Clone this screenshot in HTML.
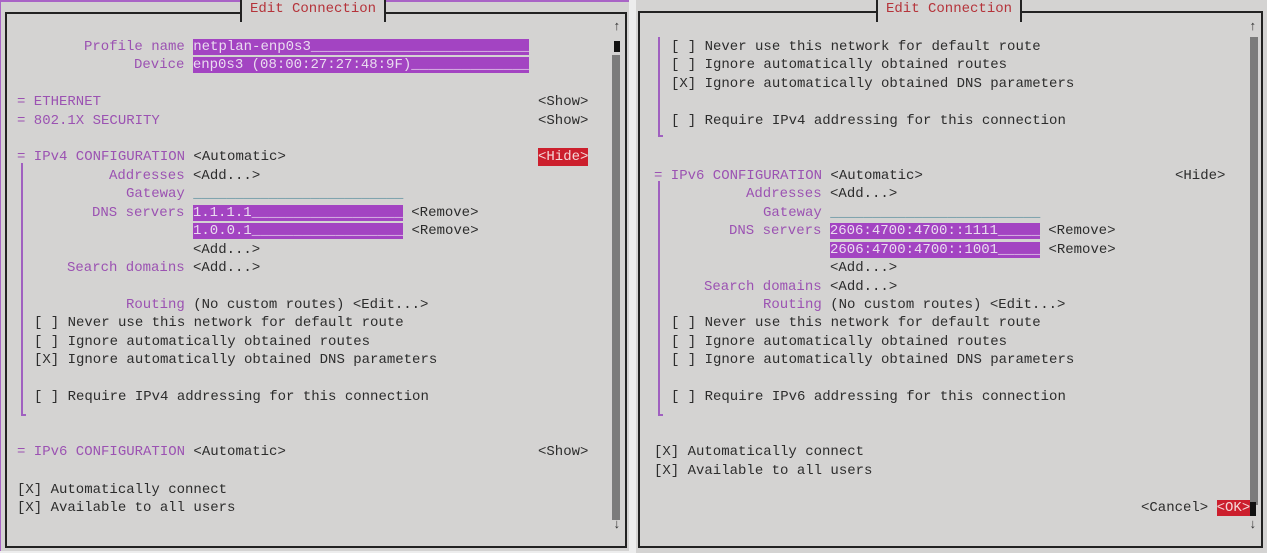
<!DOCTYPE html>
<html><head><meta charset="utf-8"><style>
*{margin:0;padding:0;box-sizing:border-box}
body{width:1267px;height:553px;background:#ededed;position:relative;overflow:hidden;font-family:"Liberation Mono","DejaVu Sans Mono",monospace;font-size:14px;color:#2c2c2c}
.pan{position:absolute;background:#d4d3d2}
.box{position:absolute;border:2px solid #222}
.l{position:absolute;white-space:pre;line-height:18px;height:18px}
.p{color:#9b52b2}
.f{background:#a344c2;color:#eadcf0}
.g{color:#4f8a99}
.r{background:#cc1f2d;color:#f4d8d8}
.t{position:absolute;background:#d4d3d2;color:#b5333a;white-space:pre;line-height:18px;padding:0 8px;border-left:2px solid #222;border-right:2px solid #222;height:22px;top:0}
.bar{position:absolute;width:2px;background:#a060c0}
.trk{position:absolute;background:#7b7b7b;width:8px}
.ar{position:absolute;font-size:13px;color:#333}
</style></head><body>
<div class="pan" style="left:0;top:0;width:629px;height:551px;border-top:2px solid #a964c6;border-left:1px solid #a964c6"></div>
<div class="pan" style="left:636px;top:0;width:631px;height:553px"></div>
<div class="box" style="left:5px;top:12px;width:622px;height:536px"></div>
<div class="box" style="left:638px;top:11px;width:625px;height:537px"></div>
<div class="t" style="left:240px">Edit Connection</div>
<div class="t" style="left:876px">Edit Connection</div>

<div class="ar" style="left:613px;top:19px">↑</div>
<div style="position:absolute;left:614px;top:41px;width:6px;height:11px;background:#111"></div>
<div class="trk" style="left:612px;top:55px;height:465px"></div>
<div class="ar" style="left:613px;top:517px">↓</div>
<div class="ar" style="left:1249px;top:19px">↑</div>
<div class="trk" style="left:1250px;top:37px;height:468px"></div>
<div class="ar" style="left:1249px;top:517px">↓</div>

<div class="bar" style="left:21px;top:163px;height:253px"></div>
<div class="bar" style="left:21px;top:414px;width:5px;height:2px"></div>
<div class="bar" style="left:658px;top:37px;height:100px"></div>
<div class="bar" style="left:658px;top:135px;width:5px;height:2px"></div>
<div class="bar" style="left:658px;top:181px;height:235px"></div>
<div class="bar" style="left:658px;top:414px;width:5px;height:2px"></div>

<!-- left -->
<div class="l" style="left:84px;top:38px"><span class="p">Profile name</span> <span class="f">netplan-enp0s3__________________________</span></div>
<div class="l" style="left:134px;top:56px"><span class="p">Device</span> <span class="f">enp0s3 (08:00:27:27:48:9F)______________</span></div>
<div class="l p" style="left:17px;top:93px">= ETHERNET</div>
<div class="l" style="left:538px;top:93px">&lt;Show&gt;</div>
<div class="l p" style="left:17px;top:112px">= 802.1X SECURITY</div>
<div class="l" style="left:538px;top:112px">&lt;Show&gt;</div>
<div class="l" style="left:17px;top:148px"><span class="p">= IPv4 CONFIGURATION</span> &lt;Automatic&gt;</div>
<div class="l r" style="left:538px;top:148px">&lt;Hide&gt;</div>
<div class="l" style="left:109px;top:167px"><span class="p">Addresses</span> &lt;Add...&gt;</div>
<div class="l" style="left:126px;top:185px"><span class="p">Gateway</span> <span class="g">_________________________</span></div>
<div class="l" style="left:92px;top:204px"><span class="p">DNS servers</span> <span class="f">1.1.1.1__________________</span> &lt;Remove&gt;</div>
<div class="l" style="left:193px;top:222px"><span class="f">1.0.0.1__________________</span> &lt;Remove&gt;</div>
<div class="l" style="left:193px;top:241px">&lt;Add...&gt;</div>
<div class="l" style="left:67px;top:259px"><span class="p">Search domains</span> &lt;Add...&gt;</div>
<div class="l" style="left:126px;top:296px"><span class="p">Routing</span> (No custom routes) &lt;Edit...&gt;</div>
<div class="l" style="left:34px;top:314px">[ ] Never use this network for default route</div>
<div class="l" style="left:34px;top:333px">[ ] Ignore automatically obtained routes</div>
<div class="l" style="left:34px;top:351px">[X] Ignore automatically obtained DNS parameters</div>
<div class="l" style="left:34px;top:388px">[ ] Require IPv4 addressing for this connection</div>
<div class="l" style="left:17px;top:443px"><span class="p">= IPv6 CONFIGURATION</span> &lt;Automatic&gt;</div>
<div class="l" style="left:538px;top:443px">&lt;Show&gt;</div>
<div class="l" style="left:17px;top:481px">[X] Automatically connect</div>
<div class="l" style="left:17px;top:499px">[X] Available to all users</div>

<!-- right -->
<div class="l" style="left:671px;top:38px">[ ] Never use this network for default route</div>
<div class="l" style="left:671px;top:56px">[ ] Ignore automatically obtained routes</div>
<div class="l" style="left:671px;top:75px">[X] Ignore automatically obtained DNS parameters</div>
<div class="l" style="left:671px;top:112px">[ ] Require IPv4 addressing for this connection</div>
<div class="l" style="left:654px;top:167px"><span class="p">= IPv6 CONFIGURATION</span> &lt;Automatic&gt;</div>
<div class="l" style="left:1175px;top:167px">&lt;Hide&gt;</div>
<div class="l" style="left:746px;top:185px"><span class="p">Addresses</span> &lt;Add...&gt;</div>
<div class="l" style="left:763px;top:204px"><span class="p">Gateway</span> <span class="g">_________________________</span></div>
<div class="l" style="left:729px;top:222px"><span class="p">DNS servers</span> <span class="f">2606:4700:4700::1111_____</span> &lt;Remove&gt;</div>
<div class="l" style="left:830px;top:241px"><span class="f">2606:4700:4700::1001_____</span> &lt;Remove&gt;</div>
<div class="l" style="left:830px;top:259px">&lt;Add...&gt;</div>
<div class="l" style="left:704px;top:278px"><span class="p">Search domains</span> &lt;Add...&gt;</div>
<div class="l" style="left:763px;top:296px"><span class="p">Routing</span> (No custom routes) &lt;Edit...&gt;</div>
<div class="l" style="left:671px;top:314px">[ ] Never use this network for default route</div>
<div class="l" style="left:671px;top:333px">[ ] Ignore automatically obtained routes</div>
<div class="l" style="left:671px;top:351px">[ ] Ignore automatically obtained DNS parameters</div>
<div class="l" style="left:671px;top:388px">[ ] Require IPv6 addressing for this connection</div>
<div class="l" style="left:654px;top:443px">[X] Automatically connect</div>
<div class="l" style="left:654px;top:462px">[X] Available to all users</div>
<div class="l" style="left:1141px;top:499px">&lt;Cancel&gt; <span class="r">&lt;OK&gt;</span></div>
<div style="position:absolute;left:1250px;top:502px;width:6px;height:14px;background:#111"></div>
</body></html>
